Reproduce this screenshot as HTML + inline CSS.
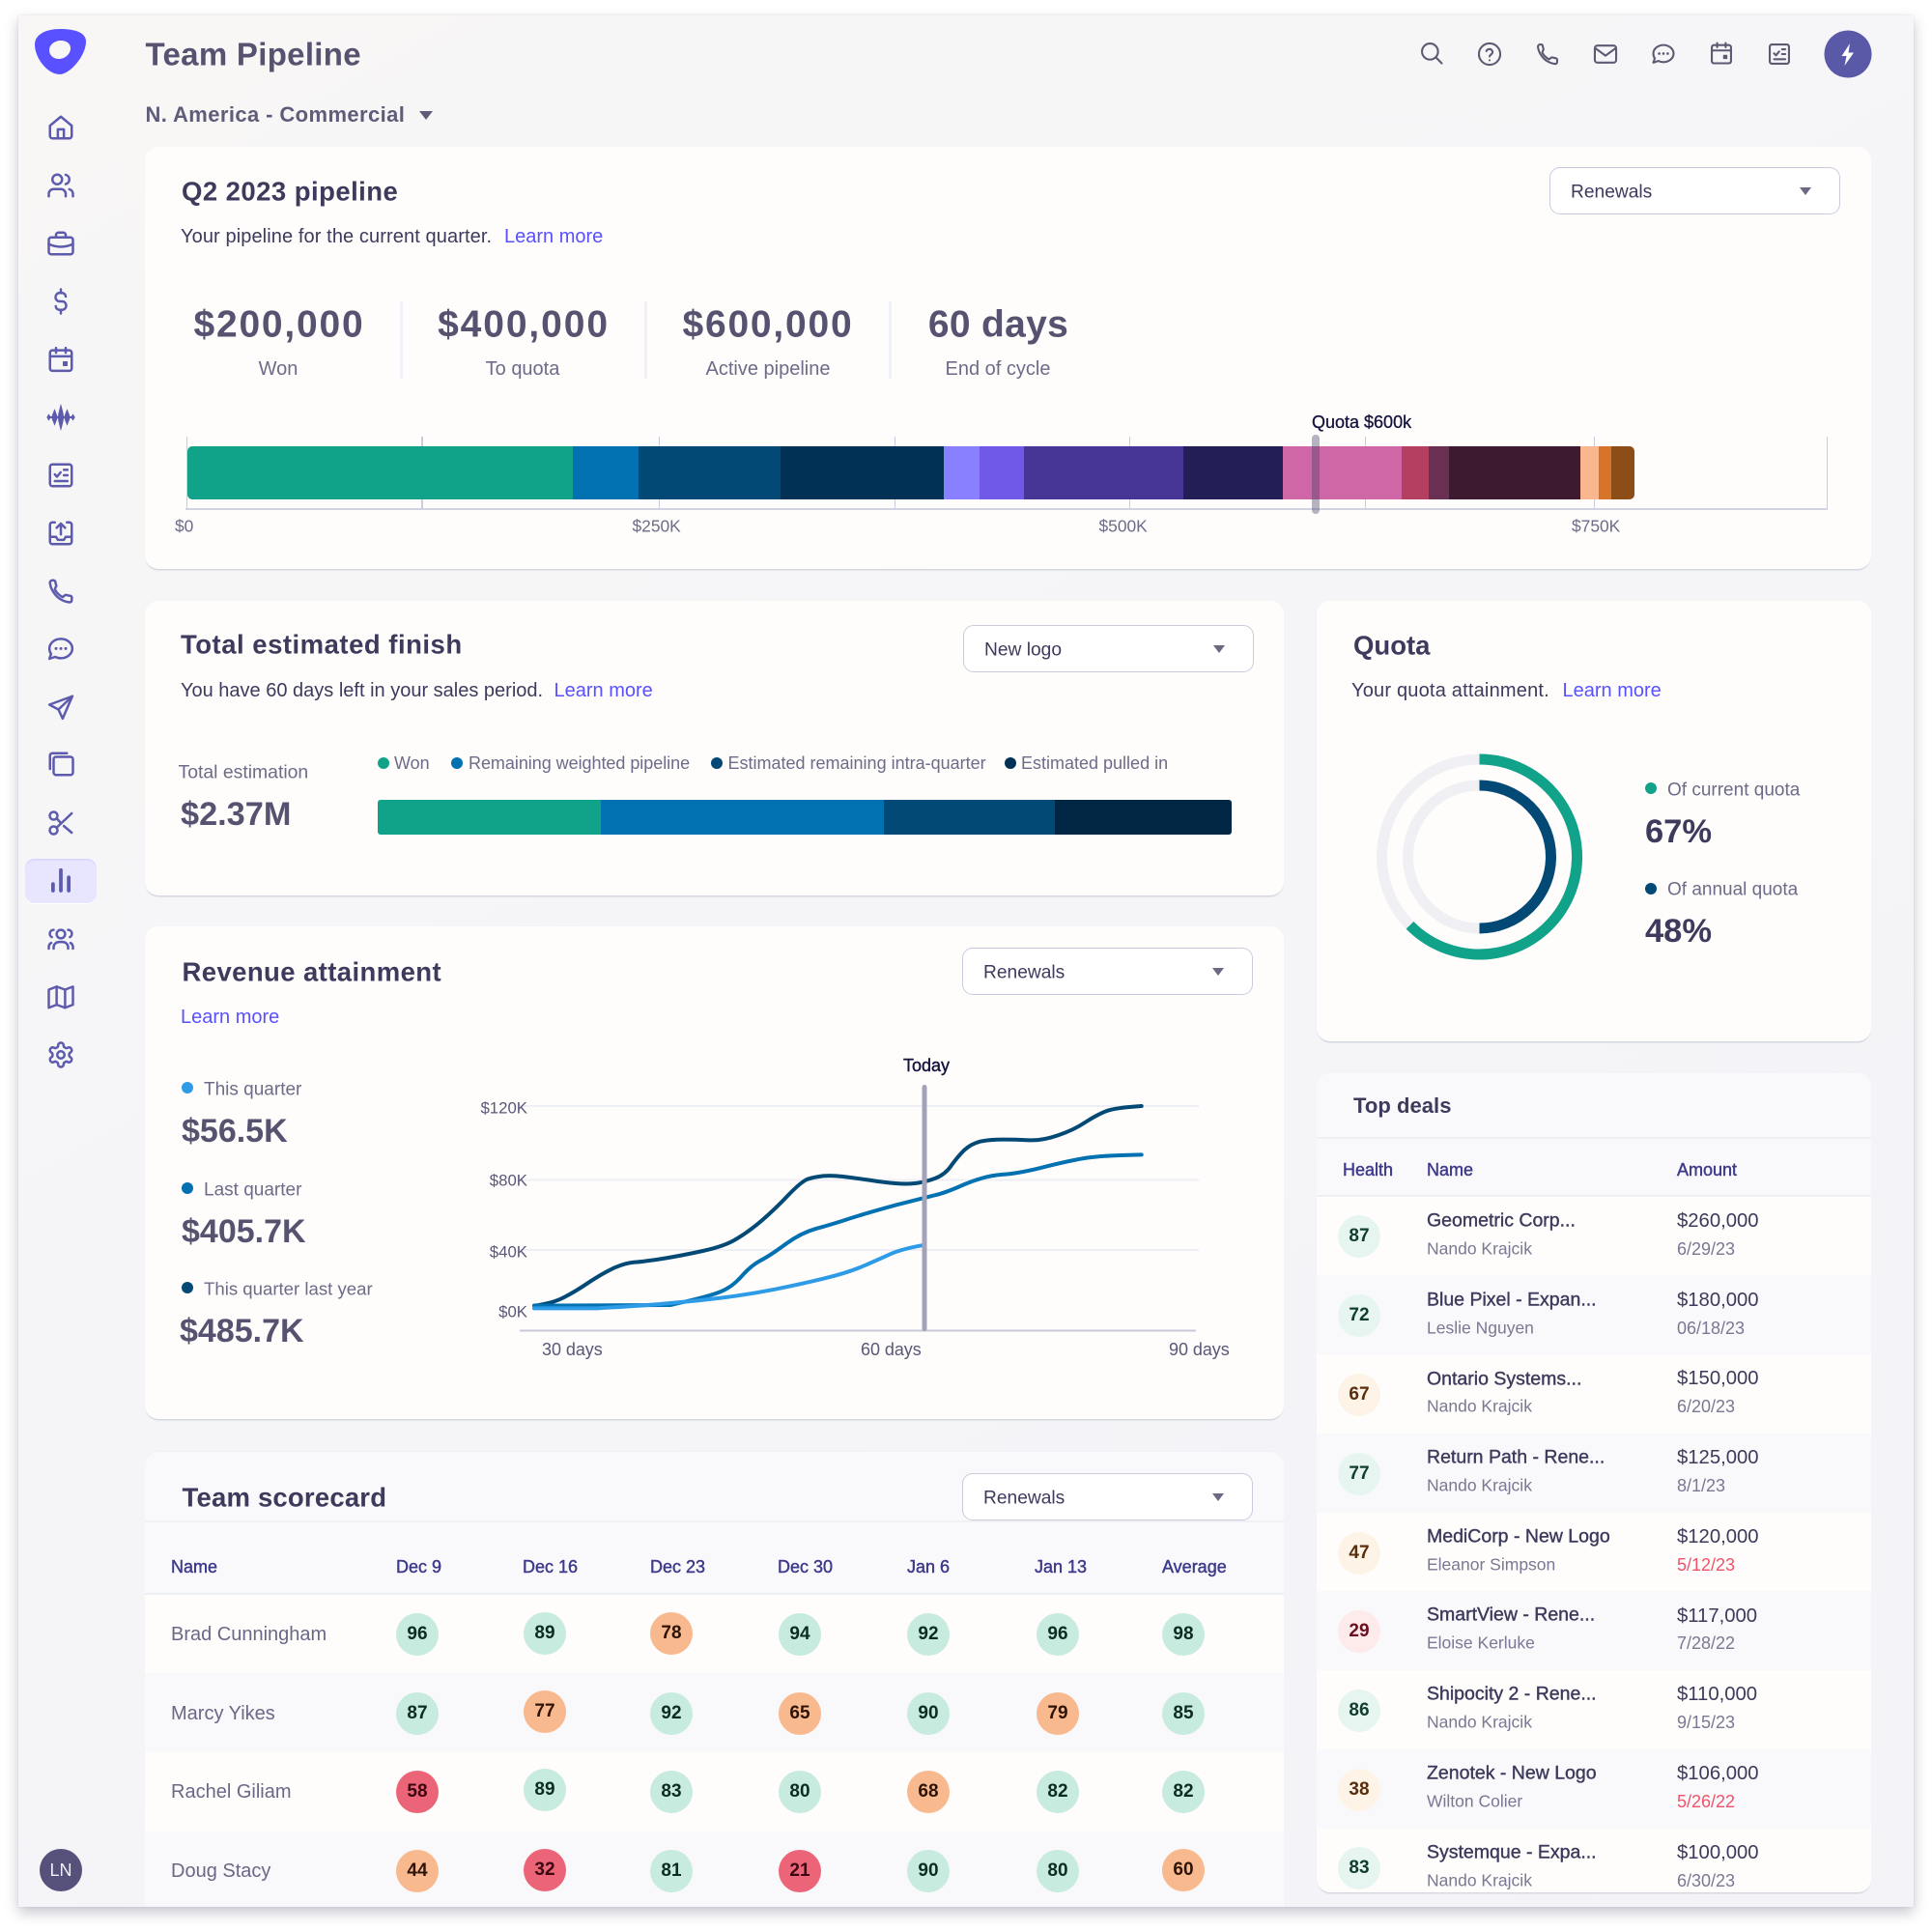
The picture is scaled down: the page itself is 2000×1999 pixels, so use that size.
<!DOCTYPE html>
<html><head><meta charset="utf-8"><title>Team Pipeline</title>
<style>
html,body{margin:0;padding:0;background:#fff}
body{width:2000px;height:1999px;position:relative;overflow:hidden;font-family:"Liberation Sans",sans-serif;color:#3d3a5c}
.a{position:absolute}
.t{position:absolute;white-space:nowrap;line-height:1;transform:translateY(-50%)}
.c{transform:translate(-50%,-50%)}
.card{position:absolute;background:#fefdfc;border-radius:14px;box-shadow:0 2px 1px -.5px #d6d6e0}
.h{font-weight:700;font-size:27.5px;color:#3d3a5c}
.b{font-size:20px;color:#3d3a5c}
.l{font-size:20px;color:#5951ff}
.s{font-size:20px;color:#6e6b88}
.big{font-weight:700;font-size:33px;color:#56526f}
.leg{font-size:18px;color:#6e6b88}
.dot{position:absolute;width:12px;height:12px;border-radius:50%}
.sel{position:absolute;width:299px;height:47px;border:1.5px solid #cbcadd;border-radius:11px;background:#fff;box-sizing:content-box}
.sel span{position:absolute;left:21px;top:50%;margin-top:1px;transform:translateY(-50%);font-size:19.2px;line-height:1;color:#3d3a5c}
.sel i{position:absolute;right:29px;top:50%;margin-top:-4px;border-left:6.5px solid transparent;border-right:6.5px solid transparent;border-top:8px solid #6b6880}
.ax{font-size:17.4px;color:#6e6b88}
.th{font-size:18px;color:#3e3a8c;-webkit-text-stroke:.45px #3e3a8c}
.nm{font-size:20px;color:#6a6787}
.bd{position:absolute;width:44px;height:44px;border-radius:50%;text-align:center;line-height:44px;font-size:19px;font-weight:700;transform:translate(-50%,-50%);margin-top:1px}
.g{background:#c8ebdf;color:#0c2c22}.o{background:#f9b98f;color:#2e1406}.r{background:#ec6478;color:#3a0610}
.lg{background:#e7f5f1;color:#0f3d2e}.lo{background:#fdf3e6;color:#5a2d0c}.lr{background:#fdeaea;color:#6a1020}
.dn{font-size:19.5px;color:#3d3a5c;-webkit-text-stroke:.4px #3d3a5c;margin-top:1px}
.ds{font-size:17.5px;color:#7a7892}
.am{font-size:20.3px;color:#3d3a5c;margin-top:1.5px}
.dt{font-size:18px;color:#7a7892}
.red{color:#f0536a}
.i{position:absolute;width:30px;height:30px;transform:translate(-50%,-50%);fill:none;stroke:#5d5bae;stroke-width:2;stroke-linecap:round;stroke-linejoin:round}
.k{stroke:#5e5a74;width:26.5px;height:26.5px;stroke-width:1.9}
.seg{position:absolute;top:0;bottom:0}
.tk{position:absolute;width:1.5px;background:#c9cddc}
</style></head><body>
<svg width="0" height="0" style="position:absolute">
<defs>
<symbol id="home" viewBox="0 0 24 24"><path d="M3 10.5 12 3l9 7.5V19a2 2 0 0 1-2 2H5a2 2 0 0 1-2-2Z"/><path d="M9.5 21v-7.5h5V21"/></symbol>
<symbol id="users" viewBox="0 0 24 24"><path d="M16 21v-2a4 4 0 0 0-4-4H6a4 4 0 0 0-4 4v2"/><circle cx="9" cy="7" r="4"/><path d="M22 21v-2a4 4 0 0 0-3-3.87M16 3.13a4 4 0 0 1 0 7.75"/></symbol>
<symbol id="brief" viewBox="0 0 24 24"><rect x="2" y="7" width="20" height="14" rx="2"/><path d="M8 7V5a2 2 0 0 1 2-2h4a2 2 0 0 1 2 2v2M2 12.5c6 3 14 3 20 0"/></symbol>
<symbol id="dollar" viewBox="0 0 24 24"><path d="M12 2v3M12 19v3M16 8A3 3 0 0 0 13 5h-2.200a3.200 3.500 0 0 0 0 7h2.400a3.200 3.500 0 0 1 0 7h-2.400a3 3 0 0 1-3-3"/></symbol>
<symbol id="cal" viewBox="0 0 24 24"><rect x="3" y="4.5" width="18" height="17" rx="2"/><path d="M8 2.5v4M16 2.5v4M3 9.5h18"/><rect x="14" y="14" width="3.2" height="3.2" fill="currentColor" stroke-width="0.8"/></symbol>
<symbol id="wave" viewBox="0 0 24 24"><path stroke-width="1.6" d="M2 12h20"/><path style="fill:#5d5bae" stroke-width="0.5" d="M12 1.5C13 6 14.200 9 14.200 12C14.200 15 13 18 12 22.500C11 18 9.800 15 9.800 12C9.800 9 11 6 12 1.500ZM6.800 5.500C7.500 8 8.900 10 8.900 12C8.900 14 7.500 16 6.800 18.500C6.100 16 4.700 14 4.700 12C4.700 10 6.100 8 6.800 5.500ZM17.200 5.500C17.900 8 19.300 10 19.300 12C19.300 14 17.900 16 17.200 18.500C16.500 16 15.100 14 15.100 12C15.100 10 16.500 8 17.200 5.500ZM2 9.500 3.500 12 2 14.500 .5 12ZM22 9.500 23.500 12 22 14.500 20.500 12Z"/></symbol>
<symbol id="check" viewBox="0 0 24 24"><rect x="3" y="3" width="18" height="18" rx="2"/><path d="M7 11.3l1.8 1.9 3-3.6M14.5 7.5h3M14.5 12h3M7 16.8h10.5"/></symbol>
<symbol id="inbox" viewBox="0 0 24 24"><path d="M7 3H5a2 2 0 0 0-2 2v14a2 2 0 0 0 2 2h14a2 2 0 0 0 2-2V5a2 2 0 0 0-2-2h-2"/><path d="M3 15h5l1.5 2.5h5L16 15h5M12 13V4M8.5 7.5 12 4l3.5 3.5"/></symbol>
<symbol id="phone" viewBox="0 0 24 24"><path d="M21 18.2v1.3a1.7 1.7 0 0 1-1.9 1.7 17 17 0 0 1-7.6-2.7 16.5 16.5 0 0 1-5.4-5.400 A17 17 0 0 1 3 5.300 2 2 0 0 1 4.900 3h.9a1.700 1.700 0 0 1 1.700 1.400c.1.800.3 1.700.600 2.500a1.700 1.700 0 0 1-.400 1.800L7 10.400a14 14 0 0 0 6.500 6.500l1.600-1.300a1.700 1.700 0 0 1 1.800-.400c.8.300 1.700.500 2.500.600A1.700 1.700 0 0 1 21 18.200Z"/></symbol>
<symbol id="chat" viewBox="0 0 24 24"><path d="M12 3.500c5.200 0 9.500 3.600 9.500 8s-4.300 8-9.500 8c-1.800 0-3.400-.4-4.800-1.100L2.500 20l1.400-4c-.9-1.300-1.400-2.800-1.400-4.500 0-4.400 4.300-8 9.500-8Z"/><path stroke-width="2.400" d="M8 11.500h.01M12 11.500h.01M16 11.500h.01"/></symbol>
<symbol id="send" viewBox="0 0 24 24"><path d="M21.500 3 2.500 10l7.500 4 3.500 7.500Z"/><path d="M21.500 3 10 14"/></symbol>
<symbol id="copy" viewBox="0 0 24 24"><rect x="6" y="6" width="16" height="15" rx="2"/><path d="M3 16V5a2 2 0 0 1 2-2h12"/></symbol>
<symbol id="sci" viewBox="0 0 24 24"><circle cx="6" cy="6" r="3.200"/><circle cx="6" cy="18" r="3.200"/><path d="M21 4 8.500 15.800M14.500 14.500 21 20M8.500 8.200 12 12"/></symbol>
<symbol id="bars" viewBox="0 0 24 24"><path stroke-width="3" d="M5.500 20v-5.500M12 20V3M18.500 20V9"/></symbol>
<symbol id="team" viewBox="0 0 24 24"><circle cx="12" cy="8" r="3.500"/><path d="M6 20v-1a4.500 4.500 0 0 1 4.500-4.500h3A4.500 4.500 0 0 1 18 19v1M6 4.500a3.200 3.200 0 0 0-1.500 6M18 4.500a3.200 3.200 0 0 1 1.500 6M2 20v-1.500a4 4 0 0 1 2-3.200M22 20v-1.500a4 4 0 0 0-2-3.200"/></symbol>
<symbol id="map" viewBox="0 0 24 24"><path d="M2 6l6.500-2.500 7 2.500L22 3.500v15L15.500 21l-7-2.500L2 21Z"/><path d="M8.500 3.500v15M15.500 6v15"/></symbol>
<symbol id="gear" viewBox="0 0 24 24"><path d="M12.220 2h-.44a2 2 0 0 0-2 2v.18a2 2 0 0 1-1 1.730l-.43.25a2 2 0 0 1-2 0l-.15-.08a2 2 0 0 0-2.730.73l-.22.38a2 2 0 0 0 .73 2.730l.15.1a2 2 0 0 1 1 1.720v.51a2 2 0 0 1-1 1.740l-.15.09a2 2 0 0 0-.73 2.730l.22.38a2 2 0 0 0 2.730.73l.15-.08a2 2 0 0 1 2 0l.43.25a2 2 0 0 1 1 1.730V20a2 2 0 0 0 2 2h.44a2 2 0 0 0 2-2v-.18a2 2 0 0 1 1-1.730l.43-.25a2 2 0 0 1 2 0l.15.08a2 2 0 0 0 2.730-.73l.22-.39a2 2 0 0 0-.73-2.730l-.15-.08a2 2 0 0 1-1-1.740v-.5a2 2 0 0 1 1-1.740l.15-.09a2 2 0 0 0 .73-2.730l-.22-.38a2 2 0 0 0-2.730-.73l-.15.08a2 2 0 0 1-2 0l-.43-.25a2 2 0 0 1-1-1.730V4a2 2 0 0 0-2-2Z"/><circle cx="12" cy="12" r="3"/></symbol>
<symbol id="search" viewBox="0 0 24 24"><circle cx="10.500" cy="10.500" r="7.500"/><path d="m16 16 5.500 5.500"/></symbol>
<symbol id="help" viewBox="0 0 24 24"><circle cx="12" cy="12" r="10"/><path d="M9 9.200a3 3 0 0 1 5.800 1c0 2-2.800 2.500-2.800 4M12 17.800h.01"/></symbol>
<symbol id="mail" viewBox="0 0 24 24"><rect x="2" y="4" width="20" height="16" rx="2.500"/><path d="m2.500 6.500 9.500 7 9.500-7"/></symbol>
</defs></svg>

<!-- window -->
<div class="a" style="left:19px;top:16px;width:1962px;height:1958px;background:linear-gradient(150deg,#f8f7f6 0,#f5f5f8 45%,#f4f4f8 100%);box-shadow:0 6px 13px rgba(50,50,85,.28),0 0 2px rgba(50,50,85,.1)"></div>

<!-- logo -->
<svg class="a" style="left:0;top:0" width="120" height="100"><path fill="#5951ff" d="M62 30C76 30 89 33 89 43C89 58 72 77 62 77C49 77 36 60 36 46C36 36 47 30 62 30Z"/><path fill="#f8f7f6" d="M63 42C70 42 73 46 73 50C73 56 67 61 61 61C55 61 51 57 51 52C51 46 57 42 63 42Z"/></svg>

<!-- sidebar -->
<div class="a" style="left:26px;top:889px;width:74px;height:46px;background:#e8e6ff;border-radius:10px;box-shadow:inset 0 1.5px 0 #d6d3ff,0 1px 0 #fff"></div>
<svg class="i" style="left:62.500px;top:132px"><use href="#home"/></svg>
<svg class="i" style="left:62.500px;top:192px"><use href="#users"/></svg>
<svg class="i" style="left:62.500px;top:252px"><use href="#brief"/></svg>
<svg class="i" style="left:62.500px;top:312px"><use href="#dollar"/></svg>
<svg class="i" style="left:62.500px;top:372px;color:#5d5bae"><use href="#cal"/></svg>
<svg class="i" style="left:62.500px;top:432px"><use href="#wave"/></svg>
<svg class="i" style="left:62.500px;top:492px"><use href="#check"/></svg>
<svg class="i" style="left:62.500px;top:551.500px"><use href="#inbox"/></svg>
<svg class="i" style="left:62.500px;top:612px"><use href="#phone"/></svg>
<svg class="i" style="left:62.500px;top:672px"><use href="#chat"/></svg>
<svg class="i" style="left:62.500px;top:732px"><use href="#send"/></svg>
<svg class="i" style="left:62.500px;top:791px"><use href="#copy"/></svg>
<svg class="i" style="left:62.500px;top:852px"><use href="#sci"/></svg>
<svg class="i" style="left:62.500px;top:912px"><use href="#bars"/></svg>
<svg class="i" style="left:62.500px;top:972px"><use href="#team"/></svg>
<svg class="i" style="left:62.500px;top:1032px"><use href="#map"/></svg>
<svg class="i" style="left:62.500px;top:1091.500px"><use href="#gear"/></svg>
<div class="a" style="left:41px;top:1914px;width:44px;height:44px;border-radius:50%;background:#55517a;color:#f0f0f6;font-size:18px;text-align:center;line-height:44px">LN</div>

<!-- top bar -->
<div class="t" style="left:150.500px;top:56px;font-size:33px;font-weight:700;letter-spacing:.3px;color:#56526f">Team Pipeline</div>
<div class="t" style="left:150.500px;top:119px;font-size:22px;font-weight:700;letter-spacing:.4px;color:#5f5c7a">N. America - Commercial</div>
<div class="a" style="left:434px;top:115px;border-left:7px solid transparent;border-right:7px solid transparent;border-top:9px solid #5f5c7a"></div>
<svg class="i k" style="left:1481.500px;top:55px"><use href="#search"/></svg>
<svg class="i k" style="left:1542px;top:56px"><use href="#help"/></svg>
<svg class="i k" style="left:1602px;top:56px"><use href="#phone"/></svg>
<svg class="i k" style="left:1662px;top:56px"><use href="#mail"/></svg>
<svg class="i k" style="left:1722px;top:56px"><use href="#chat"/></svg>
<svg class="i k" style="left:1782px;top:55px;color:#5e5a74"><use href="#cal"/></svg>
<svg class="i k" style="left:1842px;top:56px"><use href="#check"/></svg>
<svg class="a" style="left:1888px;top:31px" width="50" height="50"><circle cx="25" cy="25" r="24.500" fill="#5a59a8"/><path fill="#fff" d="M27 14 18.500 27h5l-2 10L31 23.500h-5.500Z"/></svg>

<!-- Q2 pipeline -->
<div class="card" style="left:150px;top:152px;width:1787px;height:437px"></div>
<div class="t h" style="left:188px;top:198px;letter-spacing:.45px">Q2 2023 pipeline</div>
<div class="t b" style="left:187px;top:245px;letter-spacing:.1px">Your pipeline for the current quarter.</div>
<div class="t l" style="left:522px;top:245px">Learn more</div>
<div class="sel" style="left:1604px;top:173px"><span>Renewals</span><i></i></div>

<div class="t c" style="left:289px;top:336px;font-size:39px;font-weight:700;letter-spacing:1.800px;color:#56526f">$200,000</div>
<div class="t c s" style="left:288px;top:382px">Won</div>
<div class="t c" style="left:542px;top:336px;font-size:39px;font-weight:700;letter-spacing:1.900px;color:#56526f">$400,000</div>
<div class="t c s" style="left:541px;top:382px">To quota</div>
<div class="t c" style="left:795px;top:336px;font-size:39px;font-weight:700;letter-spacing:1.800px;color:#56526f">$600,000</div>
<div class="t c s" style="left:795px;top:382px">Active pipeline</div>
<div class="t c" style="left:1033.500px;top:336px;font-size:39px;font-weight:700;letter-spacing:.3px;color:#56526f">60 days</div>
<div class="t c s" style="left:1033px;top:382px">End of cycle</div>
<div class="a" style="left:414px;top:312px;width:3px;height:80px;background:#f1f1f8"></div>
<div class="a" style="left:667px;top:312px;width:3px;height:80px;background:#f1f1f8"></div>
<div class="a" style="left:920px;top:312px;width:3px;height:80px;background:#f1f1f8"></div>

<div class="tk" style="left:192.500px;top:452px;height:76px"></div>
<div class="tk" style="left:436px;top:452px;height:76px"></div>
<div class="tk" style="left:681.500px;top:452px;height:76px"></div>
<div class="tk" style="left:925.500px;top:452px;height:76px"></div>
<div class="tk" style="left:1168.500px;top:452px;height:76px"></div>
<div class="tk" style="left:1412.500px;top:452px;height:76px"></div>
<div class="tk" style="left:1649.500px;top:452px;height:76px"></div>
<div class="tk" style="left:1890.500px;top:452px;height:76px"></div>
<div class="a" style="left:192px;top:526px;width:1700px;height:2px;background:#d2d3e0"></div>

<div class="a" style="left:194px;top:462px;width:1498px;height:55px;border-radius:5px;overflow:hidden">
<div class="seg" style="left:0;width:399px;background:#10a389"></div>
<div class="seg" style="left:399px;width:68px;background:#0271b1"></div>
<div class="seg" style="left:467px;width:147px;background:#024a75"></div>
<div class="seg" style="left:614px;width:169px;background:#013255"></div>
<div class="seg" style="left:783px;width:37px;background:#8880ff"></div>
<div class="seg" style="left:820px;width:46px;background:#7058e8"></div>
<div class="seg" style="left:866px;width:165px;background:#483697"></div>
<div class="seg" style="left:1031px;width:103px;background:#241e57"></div>
<div class="seg" style="left:1134px;width:123px;background:#cf67a7"></div>
<div class="seg" style="left:1257px;width:28px;background:#b43f61"></div>
<div class="seg" style="left:1285px;width:21px;background:#6a3053"></div>
<div class="seg" style="left:1306px;width:136px;background:#3d1a30"></div>
<div class="seg" style="left:1442px;width:19px;background:#f9b68f"></div>
<div class="seg" style="left:1461px;width:13px;background:#d6742a"></div>
<div class="seg" style="left:1474px;width:24px;background:#8d4d17"></div>
</div>
<div class="a" style="left:1358px;top:450px;width:8px;height:82px;border-radius:4px;background:rgba(70,68,100,.4)"></div>
<div class="t" style="left:1358px;top:437px;font-size:18px;color:#14123f;-webkit-text-stroke:.3px #14123f">Quota $600k</div>
<div class="t ax" style="left:181px;top:544.500px">$0</div>
<div class="t ax" style="left:654.500px;top:544.500px">$250K</div>
<div class="t ax" style="left:1137.500px;top:544.500px">$500K</div>
<div class="t ax" style="left:1627px;top:544.500px">$750K</div>

<!-- Total estimated finish -->
<div class="card" style="left:150px;top:622px;width:1179px;height:305px"></div>
<div class="t h" style="left:187px;top:667px;letter-spacing:.5px">Total estimated finish</div>
<div class="t b" style="left:187px;top:715px">You have 60 days left in your sales period.</div>
<div class="t l" style="left:573.500px;top:715px">Learn more</div>
<div class="sel" style="left:997px;top:647px"><span>New logo</span><i></i></div>
<div class="t leg" style="left:184.500px;top:800px;font-size:19.400px">Total estimation</div>
<div class="t big" style="left:187px;top:843px;font-size:34.300px">$2.37M</div>
<div class="dot" style="left:391px;top:784px;background:#10a389"></div>
<div class="t leg" style="left:408px;top:790px">Won</div>
<div class="dot" style="left:467px;top:784px;background:#0271b1"></div>
<div class="t leg" style="left:485px;top:790px;letter-spacing:-.04px">Remaining weighted pipeline</div>
<div class="dot" style="left:736px;top:784px;background:#024a75"></div>
<div class="t leg" style="left:753.500px;top:790px">Estimated remaining intra-quarter</div>
<div class="dot" style="left:1040px;top:784px;background:#013255"></div>
<div class="t leg" style="left:1057px;top:790px">Estimated pulled in</div>
<div class="a" style="left:391px;top:828px;width:884px;height:36px;border-radius:3px;overflow:hidden">
<div class="seg" style="left:0;width:231px;background:#10a389"></div>
<div class="seg" style="left:231px;width:293px;background:#0271b1"></div>
<div class="seg" style="left:524px;width:177px;background:#024a75"></div>
<div class="seg" style="left:701px;width:183px;background:#012744"></div>
</div>

<!-- Quota -->
<div class="card" style="left:1363px;top:622px;width:574px;height:456px"></div>
<div class="t h" style="left:1401px;top:668px">Quota</div>
<div class="t b" style="left:1399px;top:715px;letter-spacing:.2px">Your quota attainment.</div>
<div class="t l" style="left:1617.500px;top:715px">Learn more</div>
<svg class="a" style="left:1400px;top:760px" width="270" height="254" fill="none">
<circle cx="131.500" cy="127" r="101" stroke="#f0f0f4" stroke-width="11"/>
<circle cx="131.500" cy="127" r="74" stroke="#f0f0f4" stroke-width="11"/>
<path stroke="#10a389" stroke-width="11" d="M131.500 26A101 101 0 1 1 59.500 197.800"/>
<path stroke="#024a75" stroke-width="11" d="M131.500 53A74 74 0 0 1 131.500 201"/>
</svg>
<div class="dot" style="left:1703px;top:810px;background:#10a389"></div>
<div class="t leg" style="left:1726px;top:817.500px;font-size:19px">Of current quota</div>
<div class="t big" style="left:1703px;top:861px;font-size:34.500px;color:#3d3a5c">67%</div>
<div class="dot" style="left:1703px;top:914px;background:#024a75"></div>
<div class="t leg" style="left:1726px;top:921px;font-size:19px">Of annual quota</div>
<div class="t big" style="left:1703px;top:964px;font-size:34.500px;color:#3d3a5c">48%</div>

<!-- Revenue attainment -->
<div class="card" style="left:150px;top:959px;width:1179px;height:510px"></div>
<div class="t h" style="left:188.500px;top:1006px;letter-spacing:.4px">Revenue attainment</div>
<div class="t l" style="left:187px;top:1052.500px">Learn more</div>
<div class="sel" style="left:996px;top:981px"><span>Renewals</span><i></i></div>
<div class="dot" style="left:188px;top:1120px;background:#2e9be6"></div>
<div class="t leg" style="left:211px;top:1128px;font-size:19px">This quarter</div>
<div class="t big" style="left:188px;top:1171px;font-size:34px">$56.5K</div>
<div class="dot" style="left:188px;top:1224px;background:#0271b1"></div>
<div class="t leg" style="left:211px;top:1232px;font-size:19px">Last quarter</div>
<div class="t big" style="left:188px;top:1275px;font-size:34px">$405.7K</div>
<div class="dot" style="left:188px;top:1327px;background:#024a75"></div>
<div class="t leg" style="left:211px;top:1335px;font-size:18.600px">This quarter last year</div>
<div class="t big" style="left:186px;top:1378px;font-size:34px">$485.7K</div>

<svg class="a" style="left:0;top:0;pointer-events:none" width="2000" height="1999" fill="none">
<path stroke="#eeeef6" stroke-width="2" d="M538 1145H1241M538 1221.500H1241M538 1294H1241"/>
<path stroke="#c8c8d8" stroke-width="2" d="M538 1377.500H1238"/>
<g transform="translate(450 1080) scale(.542 .33333)" stroke-linecap="round" stroke-linejoin="round">
<path vector-effect="non-scaling-stroke" stroke="#024a75" stroke-width="4" d="M190 815Q225 808 247 789Q270 770 295 742Q320 715 342 698Q365 682 382 680Q400 678 435 669Q470 660 512 645Q555 630 577 607Q600 585 625 550Q650 515 675 472Q700 430 712 422Q725 415 742 412Q760 410 780 414Q800 418 830 425Q860 433 880 435Q900 438 917 435Q935 432 955 420Q975 408 987 379Q1000 350 1012 331Q1025 312 1042 305Q1060 299 1085 299Q1110 299 1135 301Q1160 303 1190 286Q1220 270 1242 246Q1265 222 1282 211Q1300 200 1350 195"/>
<path vector-effect="non-scaling-stroke" stroke="#0271b1" stroke-width="4" d="M190 815L450 813Q500 795 525 783Q550 772 562 758Q575 745 590 717Q605 690 622 675Q640 660 670 624Q700 588 730 575Q760 562 795 543Q830 525 882 502Q935 480 955 472Q975 465 1012 438Q1050 412 1082 408Q1115 405 1167 383Q1220 362 1245 356Q1270 350 1310 348L1350 346"/>
<path vector-effect="non-scaling-stroke" stroke="#2e9be6" stroke-width="4" d="M190 823L310 823Q400 815 450 807Q500 800 550 790Q600 780 650 764Q700 748 745 730Q790 712 820 691Q850 670 870 655Q890 640 930 628"/>
</g>
<rect x="954.500" y="1123" width="5" height="255" rx="2.500" fill="#a3a2b8"/>
</svg>
<div class="t" style="left:935px;top:1103px;font-size:18px;color:#14123f;-webkit-text-stroke:.4px #14123f">Today</div>
<div class="t ax" style="right:1454px;top:1148px;color:#5a5778;font-size:16.800px">$120K</div>
<div class="t ax" style="right:1454px;top:1223px;color:#5a5778;font-size:16.800px">$80K</div>
<div class="t ax" style="right:1454px;top:1297px;color:#5a5778;font-size:16.800px">$40K</div>
<div class="t ax" style="right:1454px;top:1359px;color:#5a5778;font-size:16.800px">$0K</div>
<div class="t ax" style="left:561px;top:1397px;font-size:18px;color:#5a5778;letter-spacing:-.05px">30 days</div>
<div class="t ax" style="left:891px;top:1397px;font-size:18px;color:#5a5778;letter-spacing:-.05px">60 days</div>
<div class="t ax" style="left:1210px;top:1397px;font-size:18px;color:#5a5778;letter-spacing:-.05px">90 days</div>

<!-- Team scorecard -->
<div class="a" style="left:150px;top:1503px;width:1179px;height:471px;background:#f9f9fb;border-radius:14px 14px 0 0;box-shadow:0 -1px 0 #f2f2f6"></div>
<div class="t h" style="left:188.500px;top:1550px;letter-spacing:.2px">Team scorecard</div>
<div class="sel" style="left:996px;top:1525px"><span>Renewals</span><i></i></div>
<div class="a" style="left:150px;top:1574px;width:1179px;height:2px;background:#f0f0f5"></div>
<div class="a" style="left:150px;top:1649px;width:1179px;height:2px;background:#eeeff4"></div>
<div class="a" style="left:150px;top:1651px;width:1179px;height:81px;background:#fefdfc"></div>
<div class="a" style="left:150px;top:1814px;width:1179px;height:82px;background:#fefdfc"></div>
<div class="t th" style="left:177px;top:1622px">Name</div>
<div class="t th" style="left:410px;top:1622px">Dec 9</div>
<div class="t th" style="left:541px;top:1622px">Dec 16</div>
<div class="t th" style="left:673px;top:1622px">Dec 23</div>
<div class="t th" style="left:805px;top:1622px">Dec 30</div>
<div class="t th" style="left:939px;top:1622px">Jan 6</div>
<div class="t th" style="left:1071px;top:1622px">Jan 13</div>
<div class="t th" style="left:1203px;top:1622px">Average</div>
<div class="t nm" style="left:177px;top:1692px">Brad Cunningham</div>
<div class="t nm" style="left:177px;top:1774px">Marcy Yikes</div>
<div class="t nm" style="left:177px;top:1855px">Rachel Giliam</div>
<div class="t nm" style="left:177px;top:1937px">Doug Stacy</div>

<div class="bd g" style="left:432px;top:1691px">96</div><div class="bd g" style="left:564px;top:1689.500px">89</div><div class="bd o" style="left:695px;top:1689.500px">78</div><div class="bd g" style="left:828px;top:1691px">94</div><div class="bd g" style="left:961px;top:1691px">92</div><div class="bd g" style="left:1095px;top:1691px">96</div><div class="bd g" style="left:1225px;top:1691px">98</div>
<div class="bd g" style="left:432px;top:1773px">87</div><div class="bd o" style="left:564px;top:1771px">77</div><div class="bd g" style="left:695px;top:1773px">92</div><div class="bd o" style="left:828px;top:1773px">65</div><div class="bd g" style="left:961px;top:1773px">90</div><div class="bd o" style="left:1095px;top:1773px">79</div><div class="bd g" style="left:1225px;top:1773px">85</div>
<div class="bd r" style="left:432px;top:1854px">58</div><div class="bd g" style="left:564px;top:1852px">89</div><div class="bd g" style="left:695px;top:1854px">83</div><div class="bd g" style="left:828px;top:1854px">80</div><div class="bd o" style="left:961px;top:1854px">68</div><div class="bd g" style="left:1095px;top:1854px">82</div><div class="bd g" style="left:1225px;top:1854px">82</div>
<div class="bd o" style="left:432px;top:1936px">44</div><div class="bd r" style="left:564px;top:1934.500px">32</div><div class="bd g" style="left:695px;top:1936px">81</div><div class="bd r" style="left:828px;top:1936px">21</div><div class="bd g" style="left:961px;top:1936px">90</div><div class="bd g" style="left:1095px;top:1936px">80</div><div class="bd o" style="left:1225px;top:1935px">60</div>

<!-- Top deals -->
<div class="a" style="left:1363px;top:1111px;width:574px;height:848px;background:#f9f9fb;border-radius:14px;box-shadow:0 2px 1px -.5px #d6d6e0"></div>
<div class="t" style="left:1401px;top:1145px;font-size:22px;font-weight:700;letter-spacing:.05px;color:#3d3a5c">Top deals</div>
<div class="a" style="left:1363px;top:1177px;width:574px;height:2px;background:#eeeef3"></div>
<div class="a" style="left:1363px;top:1237px;width:574px;height:2px;background:#eeeff4"></div>
<div class="t th" style="left:1390px;top:1211px">Health</div>
<div class="t th" style="left:1477px;top:1211px">Name</div>
<div class="t th" style="left:1736px;top:1211px">Amount</div>
<div class="a" style="left:1363px;top:1239px;width:574px;height:81px;background:#fefdfc"></div>
<div class="a" style="left:1363px;top:1402px;width:574px;height:82px;background:#fefdfc"></div>
<div class="a" style="left:1363px;top:1566px;width:574px;height:81px;background:#fefdfc"></div>
<div class="a" style="left:1363px;top:1729px;width:574px;height:82px;background:#fefdfc"></div>
<div class="a" style="left:1363px;top:1893px;width:574px;height:66px;background:#fefdfc;border-radius:0 0 14px 14px"></div>

<div class="bd lg" style="left:1407px;top:1279px">87</div><div class="t dn" style="left:1477px;top:1263px">Geometric Corp...</div><div class="t ds" style="left:1477px;top:1293px">Nando Krajcik</div><div class="t am" style="left:1736px;top:1262px">$260,000</div><div class="t dt" style="left:1736px;top:1293px">6/29/23</div>
<div class="bd lg" style="left:1407px;top:1361px">72</div><div class="t dn" style="left:1477px;top:1345px">Blue Pixel - Expan...</div><div class="t ds" style="left:1477px;top:1375px">Leslie Nguyen</div><div class="t am" style="left:1736px;top:1344px">$180,000</div><div class="t dt" style="left:1736px;top:1375px">06/18/23</div>
<div class="bd lo" style="left:1407px;top:1443px">67</div><div class="t dn" style="left:1477px;top:1426.500px">Ontario Systems...</div><div class="t ds" style="left:1477px;top:1456px">Nando Krajcik</div><div class="t am" style="left:1736px;top:1425.500px">$150,000</div><div class="t dt" style="left:1736px;top:1456px">6/20/23</div>
<div class="bd lg" style="left:1407px;top:1525px">77</div><div class="t dn" style="left:1477px;top:1508px">Return Path - Rene...</div><div class="t ds" style="left:1477px;top:1538px">Nando Krajcik</div><div class="t am" style="left:1736px;top:1507px">$125,000</div><div class="t dt" style="left:1736px;top:1538px">8/1/23</div>
<div class="bd lo" style="left:1407px;top:1607px">47</div><div class="t dn" style="left:1477px;top:1590px">MediCorp - New Logo</div><div class="t ds" style="left:1477px;top:1620px">Eleanor Simpson</div><div class="t am" style="left:1736px;top:1589px">$120,000</div><div class="t dt red" style="left:1736px;top:1620px">5/12/23</div>
<div class="bd lr" style="left:1407px;top:1688px">29</div><div class="t dn" style="left:1477px;top:1671px">SmartView - Rene...</div><div class="t ds" style="left:1477px;top:1701px">Eloise Kerluke</div><div class="t am" style="left:1736px;top:1671px">$117,000</div><div class="t dt" style="left:1736px;top:1701px">7/28/22</div>
<div class="bd lg" style="left:1407px;top:1770px">86</div><div class="t dn" style="left:1477px;top:1753px">Shipocity 2 - Rene...</div><div class="t ds" style="left:1477px;top:1783px">Nando Krajcik</div><div class="t am" style="left:1736px;top:1752px">$110,000</div><div class="t dt" style="left:1736px;top:1783px">9/15/23</div>
<div class="bd lo" style="left:1407px;top:1852px">38</div><div class="t dn" style="left:1477px;top:1835px">Zenotek - New Logo</div><div class="t ds" style="left:1477px;top:1865px">Wilton Colier</div><div class="t am" style="left:1736px;top:1834px">$106,000</div><div class="t dt red" style="left:1736px;top:1865px">5/26/22</div>
<div class="bd lg" style="left:1407px;top:1933px">83</div><div class="t dn" style="left:1477px;top:1917px">Systemque - Expa...</div><div class="t ds" style="left:1477px;top:1947px">Nando Krajcik</div><div class="t am" style="left:1736px;top:1916px">$100,000</div><div class="t dt" style="left:1736px;top:1947px">6/30/23</div>
</body></html>
